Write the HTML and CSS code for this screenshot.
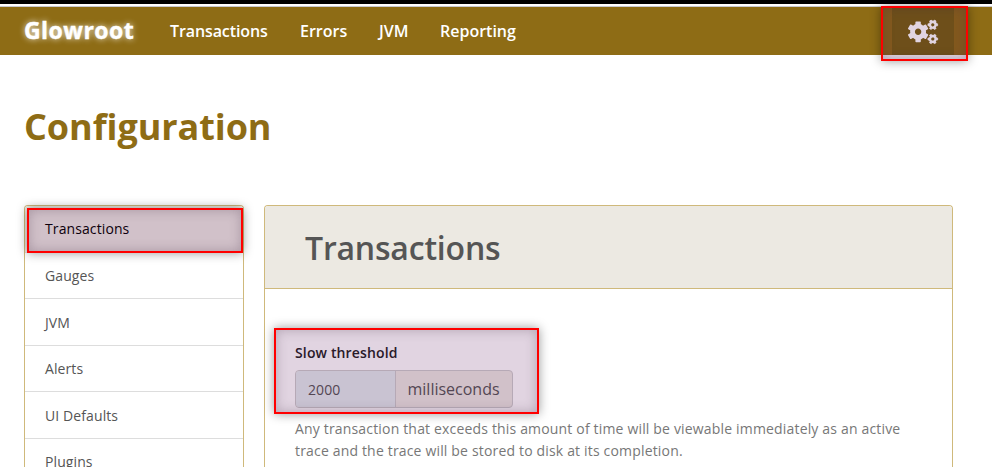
FILE: index.html
```html
<!DOCTYPE html>
<html lang="en">
<head>
<meta charset="utf-8">
<title>Glowroot</title>
<link rel="stylesheet" href="styles.css">
</head>
<body>
<div class="topline"></div>
<header class="navbar">
  <a class="brand">Glowroot</a>
  <nav class="links"><a class="l1">Transactions</a><a class="l2">Errors</a><a class="l3">JVM</a><a class="l4">Reporting</a></nav>
  <a class="config">
    <svg class="cogs" viewBox="0 0 32 28">
      <defs>
        <g id="gear">
          <circle r="5.6" fill="none" stroke-width="4.8"/>
          <path d="M-2 -7.2V-9.7H2V-7.2ZM-2 7.2V9.7H2V7.2Z"/>
          <path d="M-2 -7.2V-9.7H2V-7.2ZM-2 7.2V9.7H2V7.2Z" transform="rotate(60)"/>
          <path d="M-2 -7.2V-9.7H2V-7.2ZM-2 7.2V9.7H2V7.2Z" transform="rotate(120)"/>
        </g>
      </defs>
      <use href="#gear" transform="translate(11.1 13.8)"/>
      <use href="#gear" transform="translate(25.8 6.8) rotate(30) scale(.5)"/>
      <use href="#gear" transform="translate(25.8 21) rotate(30) scale(.5)"/>
    </svg>
    <span class="mark mark-config"></span>
  </a>
</header>
<main class="page">
  <h1>Configuration</h1>
  <div class="columns">
    <nav class="sidebar">
      <a class="active">Transactions<span class="mark mark-side"></span></a>
      <a>Gauges</a>
      <a class="low">JVM</a>
      <a>Alerts</a>
      <a class="low">UI Defaults</a>
      <a>Plugins</a>
    </nav>
    <section class="panel">
      <h2>Transactions</h2>
      <div class="body">
        <div class="field">
          <label>Slow threshold</label>
          <div class="group"><span class="input">2000</span><span class="addon">milliseconds</span></div>
          <span class="mark mark-field"></span>
        </div>
        <p>Any transaction that exceeds this amount of time will be viewable immediately as an active<br>trace and the trace will be stored to disk at its completion.</p>
      </div>
    </section>
  </div>
</main>
</body>
</html>
```
FILE: styles.css
```css
* { box-sizing: border-box; }
html { height: 467px; overflow: hidden; }
body {
  margin: 0;
  height: 467px;
  overflow: hidden;
  background: #fff;
  color: #555;
  font: 14px/21px "Open Sans", sans-serif;
}
.topline { height: 7px; background: #fff; border-top: 4px solid #000; border-bottom: 1px solid #c9c9cf; }
.navbar {
  display: flex;
  height: 48px;
  padding: 0 38px 0 24px;
  background: #8e6c15;
  color: #fff;
}
.brand {
  width: 146px;
  font-size: 23px;
  font-weight: 700;
  letter-spacing: .46px;
  line-height: 47px;
  -webkit-text-stroke: .4px #fff;
  text-shadow: 0 0 6px rgba(255, 255, 255, .9);
}
.links { display: flex; flex: 1; font-size: 16px; font-weight: 600; line-height: 48px; }
.l1 { width: 130px; letter-spacing: -.1px; }
.l2 { width: 79px; }
.l3 { width: 61px; }
.config {
  position: relative;
  display: flex;
  align-items: center;
  justify-content: center;
  width: 62px;
  background: #755f10;
}
.cogs { width: 32px; height: 28px; margin-top: 2px; fill: #fff; stroke: #fff; stroke-width: 1.4; stroke-linejoin: round; overflow: visible; }
.page { padding: 0 24px; }
h1 { margin: 0; padding-top: 46px; height: 150px; color: #8e6c15; font-size: 36px; font-weight: 700; letter-spacing: -.08px; line-height: 52px; }
.columns { display: flex; gap: 20px; align-items: flex-start; }
.sidebar { width: 220px; height: 262px; border: 1px solid #cfb97b; border-bottom: 0; border-radius: 4px 4px 0 0; letter-spacing: .1px; }
.sidebar a {
  position: relative;
  display: block;
  height: 46.6px;
  padding: 12px 20px;
  border-bottom: 1px solid #ddd;
}
.sidebar a.low { padding-top: 13px; }
.sidebar a:last-child { height: 28px; border-bottom: 0; padding-bottom: 0; }
.sidebar .active { background: #ece9e2; color: #000; border-radius: 3px 3px 0 0; }
.panel { width: 689px; height: 262px; border: 1px solid #cfb97b; border-bottom: 0; border-radius: 4px 4px 0 0; }
h2 {
  margin: 0;
  height: 83px;
  padding-left: 40px;
  background: #ece9e2;
  border-bottom: 1px solid #cfb97b;
  border-radius: 3px 3px 0 0;
  font-size: 32px;
  font-weight: 600;
  letter-spacing: -.2px;
  line-height: 84px;
}
.body { padding: 53px 30px 0; }
.field { position: relative; height: 76px; }
label { display: block; color: #222; font-weight: 600; letter-spacing: .14px; line-height: 21px; }
.group { display: flex; width: 218px; height: 38px; margin-top: 7px; border: 1px solid #ccc; border-radius: 4px; background: #ece9e2; }
.input { width: 100px; padding-left: 12px; background: #e3ebed; border-right: 1px solid #ccc; border-radius: 3px 0 0 3px; letter-spacing: .1px; line-height: 37px; }
.addon { padding-left: 11.5px; font-size: 16px; line-height: 36px; }
p { margin: 0; color: #777; letter-spacing: .17px; line-height: 22px; white-space: nowrap; }
.mark {
  position: absolute;
  border: 2px solid #f00;
  background: rgba(80, 0, 80, .17);
  box-shadow: 0 0 10px rgba(0, 0, 0, .4), inset 0 0 12px rgba(60, 40, 60, .28);
}
.mark-config { left: -11px; top: -1px; width: 87px; height: 55px; }
.mark-side { left: 2px; top: 2px; width: 216px; height: 45px; z-index: 1; }
.mark-field { left: -21px; top: -14px; width: 265px; height: 86px; }
```
